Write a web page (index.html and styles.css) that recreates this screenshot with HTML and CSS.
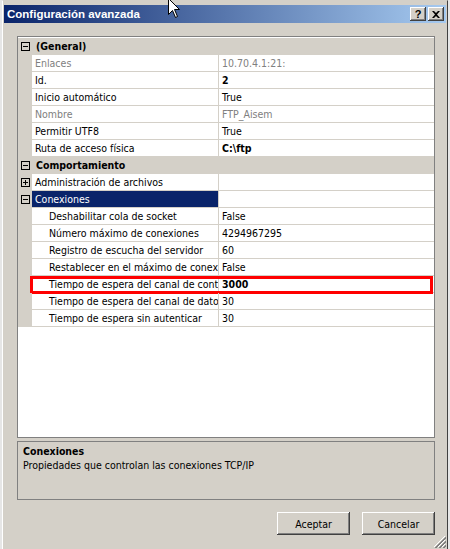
FILE: index.html
```html
<!DOCTYPE html>
<html lang="es">
<head>
<meta charset="utf-8">
<title>Configuración avanzada</title>
<link rel="stylesheet" href="styles.css">
</head>
<body>
<div class="window">
  <div class="titlebar">
    <span class="title">Configuración avanzada</span>
    <div class="tbtns">
      <span class="tbtn help">?</span>
      <span class="tbtn close"><svg width="8" height="7" viewBox="0 0 8 7"><path d="M0 0h2l2 2 2-2h2L5 3.5 8 7H6L4 5 2 7H0l3-3.5z" fill="#000"/></svg></span>
    </div>
  </div>
  <div class="client">
    <div class="grid">
      <div class="row cat"><span class="gut"><i class="box minus"></i></span><span class="catname">(General)</span></div>
      <div class="row dis"><span class="gut"></span><span class="name">Enlaces</span><span class="val">10.70.4.1:21:</span></div>
      <div class="row"><span class="gut"></span><span class="name">Id.</span><span class="val b">2</span></div>
      <div class="row"><span class="gut"></span><span class="name">Inicio automático</span><span class="val">True</span></div>
      <div class="row dis"><span class="gut"></span><span class="name">Nombre</span><span class="val">FTP_Aisem</span></div>
      <div class="row"><span class="gut"></span><span class="name">Permitir UTF8</span><span class="val">True</span></div>
      <div class="row"><span class="gut"></span><span class="name">Ruta de acceso física</span><span class="val b">C:\ftp</span></div>
      <div class="row cat"><span class="gut"><i class="box minus"></i></span><span class="catname">Comportamiento</span></div>
      <div class="row"><span class="gut"><i class="box plus"></i></span><span class="name">Administración de archivos</span><span class="val"></span></div>
      <div class="row"><span class="gut"><i class="box minus"></i></span><span class="name sel">Conexiones</span><span class="val"></span></div>
      <div class="row sub"><span class="gut"></span><span class="name">Deshabilitar cola de socket</span><span class="val">False</span></div>
      <div class="row sub"><span class="gut"></span><span class="name">Número máximo de conexiones</span><span class="val">4294967295</span></div>
      <div class="row sub"><span class="gut"></span><span class="name">Registro de escucha del servidor</span><span class="val">60</span></div>
      <div class="row sub"><span class="gut"></span><span class="name">Restablecer en el máximo de conexiones</span><span class="val">False</span></div>
      <div class="row sub mark"><span class="gut"></span><span class="name">Tiempo de espera del canal de control</span><span class="val b">3000</span></div>
      <div class="row sub"><span class="gut"></span><span class="name">Tiempo de espera del canal de datos</span><span class="val">30</span></div>
      <div class="row sub"><span class="gut"></span><span class="name">Tiempo de espera sin autenticar</span><span class="val">30</span></div>
    </div>
    <div class="desc">
      <div class="desc-title">Conexiones</div>
      <div class="desc-text">Propiedades que controlan las conexiones TCP/IP</div>
    </div>
    <div class="btns">
      <button class="btn">Aceptar</button>
      <button class="btn">Cancelar</button>
    </div>
  </div>
  <svg class="grip" width="12" height="12" viewBox="0 0 12 12">
    <path d="M11 0L0 11M11 4L4 11M11 8L8 11" stroke="#fff" stroke-width="1"/>
    <path d="M12 1L1 12M12 2L2 12M12 5L5 12M12 6L6 12M12 9L9 12M12 10L10 12" stroke="#808080" stroke-width="1"/>
  </svg>
  <svg class="cursor" width="14" height="22" viewBox="0 0 14 22">
    <path d="M1.5 0.5V16.5L5.5 12.5L8.5 19.5L10.5 18.5L7.5 11.5H12.5Z" fill="#fff" stroke="#000" stroke-width="1" stroke-linejoin="miter"/>
  </svg>
</div>
</body>
</html>
```
FILE: styles.css
```css
*, *::before, *::after { box-sizing: border-box; }
html, body { margin: 0; padding: 0; }
body {
  width: 450px;
  height: 549px;
  overflow: hidden;
  background: #e6e6e6;
  font-family: "DejaVu Sans Condensed", "Liberation Sans", Arial, sans-serif;
  font-size: 10.5px;
  color: #000;
}
.window {
  position: relative;
  margin-left: 2px;
  width: 446px;
  height: 549px;
  background: #d4d0c8;
  border-left: 1px solid #fff;
  border-right: 1px solid #404040;
  border-top: 1px solid #d4d0c8;
  padding: 4px 1px 0 1px;
}
.titlebar {
  height: 18px;
  display: flex;
  align-items: center;
  justify-content: space-between;
  padding: 0 2px 0 3px;
  background: linear-gradient(to right, #0a246a, #a6caf0);
  color: #fff;
  font-family: "Liberation Sans", Arial, sans-serif;
  font-weight: bold;
  font-size: 11.5px;
}
.tbtns { display: flex; gap: 2px; }
.tbtn {
  width: 16px;
  height: 14px;
  background: #d4d0c8;
  box-shadow: inset -1px -1px #404040, inset 1px 1px #fff, inset -2px -2px #808080;
  display: flex;
  align-items: center;
  justify-content: center;
  color: #000;
  font-size: 11px;
  font-weight: bold;
  line-height: 14px;
}
.tbtn.help { padding-bottom: 1px; }
.client { padding: 13px 11px 0 13px; }
.grid {
  height: 402px;
  border: 1px solid #808080;
  background: #fff;
  padding-top: 1px;
}
.row {
  position: relative;
  display: flex;
  height: 17px;
  line-height: 16px;
  white-space: nowrap;
}
.gut {
  flex: none;
  width: 14px;
  background: #d4d0c8;
  display: flex;
  align-items: center;
  justify-content: center;
  padding-bottom: 1px;
}
.name {
  flex: none;
  width: 187px;
  padding-left: 3px;
  border-bottom: 1px solid #d4d0c8;
  border-right: 1px solid #d4d0c8;
  overflow: hidden;
}
.val {
  flex: 1;
  padding-left: 3px;
  border-bottom: 1px solid #d4d0c8;
  overflow: hidden;
}
.b { font-weight: bold; }
.dis .name, .dis .val { color: #808080; }
.sub .name { padding-left: 17px; }
.sel { background: #0a246a; color: #fff; }
.cat { background: #d4d0c8; }
.catname { padding-left: 4px; font-weight: bold; }
.box {
  position: relative;
  display: block;
  width: 9px;
  height: 9px;
  border: 1px solid #000;
}
.box::before {
  content: "";
  position: absolute;
  left: 1px;
  top: 3px;
  width: 5px;
  height: 1px;
  background: #000;
}
.box.plus::after {
  content: "";
  position: absolute;
  left: 3px;
  top: 1px;
  width: 1px;
  height: 5px;
  background: #000;
}
.mark::after {
  content: "";
  position: absolute;
  left: 12px;
  right: 1px;
  top: 0;
  height: 18px;
  border: 3px solid #ff0000;
}
.desc {
  margin-top: 3px;
  height: 59px;
  border: 1px solid #808080;
  padding: 2px 5px;
}
.desc-title { font-weight: bold; line-height: 14px; }
.desc-text { line-height: 15px; }
.btns {
  margin-top: 12px;
  display: flex;
  justify-content: flex-end;
  gap: 12px;
}
.btn {
  width: 73px;
  height: 23px;
  padding: 0;
  border: none;
  background: #d4d0c8;
  box-shadow: inset -1px -1px #404040, inset 1px 1px #fff, inset -2px -2px #808080;
  font-family: inherit;
  font-size: inherit;
  color: #000;
}
.grip { position: absolute; right: 1px; bottom: 1px; }
.cursor { position: absolute; left: 164px; top: -3px; }
```
